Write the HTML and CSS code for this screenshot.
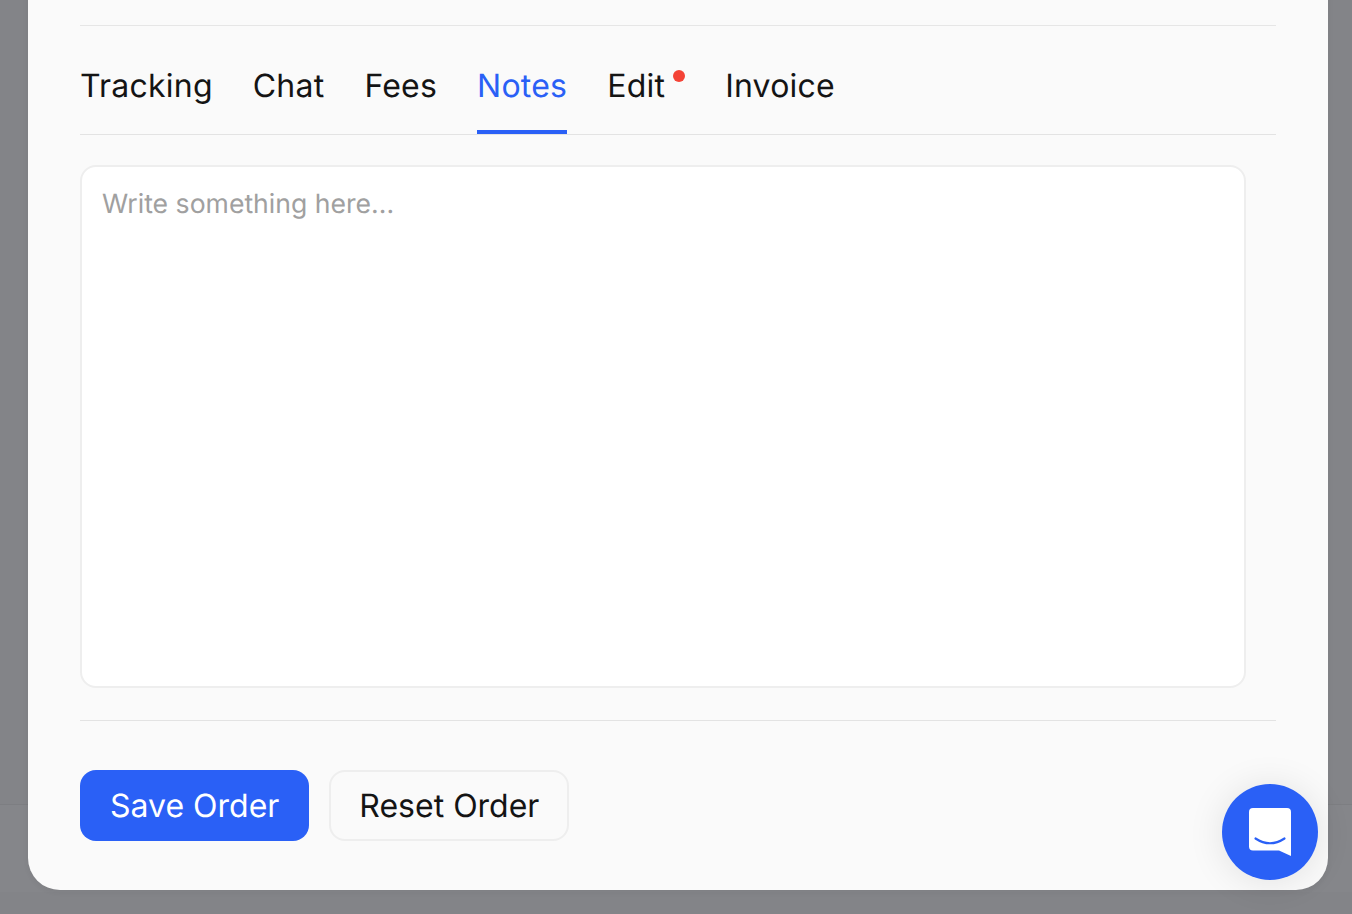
FILE: index.html
```html
<!DOCTYPE html>
<html lang="en">
<head>
<meta charset="utf-8">
<title>Order notes</title>
<link rel="stylesheet" href="styles.css">
</head>
<body>
<div class="backdrop"><div class="backdrop-top"></div><div class="backdrop-row"></div></div>
<main class="modal">
  <nav class="tabs">
    <a class="tab">Tracking</a>
    <a class="tab">Chat</a>
    <a class="tab">Fees</a>
    <a class="tab active">Notes</a>
    <a class="tab dotted">Edit<span class="dot"></span></a>
    <a class="tab">Invoice</a>
  </nav>
  <textarea class="notes" placeholder="Write something here..."></textarea>
  <div class="actions">
    <button class="btn primary">Save Order</button>
    <button class="btn secondary">Reset Order</button>
  </div>
</main>
<button class="chat" aria-label="Chat">
  <svg width="42" height="48" viewBox="0 0 42 48">
    <path d="M4 0H38A4 4 0 0 1 42 4V48L30 42.600H4A4 4 0 0 1 0 38.600V4A4 4 0 0 1 4 0Z" fill="#fff"/>
    <path d="M6.500 30.500Q21 40 35.500 30.500" fill="none" stroke="#2a60f6" stroke-width="2.200" stroke-linecap="round"/>
  </svg>
</button>
</body>
</html>
```
FILE: styles.css
```css
* { box-sizing: border-box; }
html, body { margin: 0; height: 100%; overflow: hidden; }
body { background: #838488; font-family: Inter, "Liberation Sans", sans-serif; color: #141414; }
.backdrop-top { height: 804px; }
.backdrop-row { height: 88px; border-top: 1px solid #7d7e82; background: #85868a; }
.modal {
  position: absolute; left: 28px; top: -100px; width: 1300px; height: 990px;
  padding: 125px 52px 0; background: #fafafa;
  border-radius: 0 0 32px 32px;
  box-shadow: 0 2px 6px rgba(0,0,0,.05);
  display: flex; flex-direction: column;
}
.tabs {
  display: flex; gap: 40px; height: 110px; padding-top: 25px;
  border-top: 1px solid #e6e6e6; border-bottom: 1px solid #e3e3e3;
}
.tab { position: relative; font-size: 32px; line-height: 70px; height: 83px; font-weight: 400; letter-spacing: .22px; text-rendering: geometricPrecision; }
.tab.active { color: #2a60f6; border-bottom: 4px solid #2a60f6; }
.tab.dotted { margin-right: 20px; }
.dot {
  position: absolute; top: 19px; right: -20px; width: 12px; height: 12px;
  border-radius: 50%; background: #f44336;
}
.notes {
  display: block; width: 1166px; height: 523px; margin-top: 30px;
  padding: 20px; resize: none; outline: none;
  background: #fff; border: 2px solid #eeeeee; border-radius: 16px;
  font: 400 26.6px/34px Inter, "Liberation Sans", sans-serif; color: #141414;
  text-rendering: geometricPrecision;
}
.notes::placeholder { color: #a0a0a0; opacity: 1; }
.actions {
  display: flex; gap: 20px; margin-top: 32px; padding-top: 49px;
  border-top: 1px solid #e3e3e3;
}
.btn {
  height: 71px; padding: 0 30px; border-radius: 16px;
  font: 400 32px/1 Inter, "Liberation Sans", sans-serif; cursor: pointer;
  text-rendering: geometricPrecision;
}
.primary { background: #2a60f6; color: #fff; border: 0; }
.secondary { padding: 0 28px; background: #fafafa; color: #141414; border: 2px solid #eeeeee; }
.chat {
  position: fixed; left: 1222px; top: 784px; width: 96px; height: 96px;
  display: flex; align-items: center; justify-content: center; padding: 0;
  border: 0; border-radius: 50%; background: #2a60f6;
  box-shadow: 0 2px 36px rgba(0,0,0,.1);
}
```
